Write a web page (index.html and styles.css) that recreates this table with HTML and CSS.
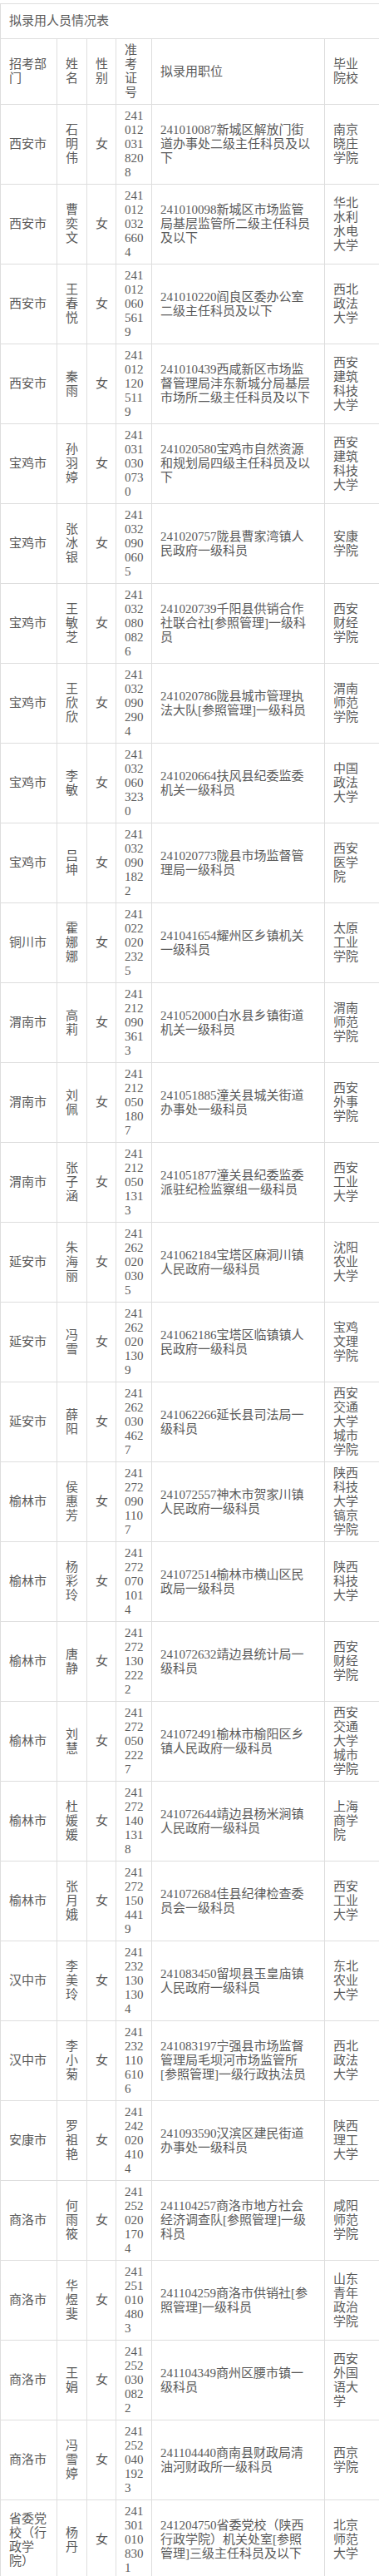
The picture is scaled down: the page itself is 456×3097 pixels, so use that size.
FILE: index.html
```html
<!DOCTYPE html>
<html lang="zh-CN">
<head>
<meta charset="utf-8">
<title>拟录用人员情况表</title>
<link rel="stylesheet" href="styles.css">
</head>
<body>
<table class="sheet">
  <colgroup>
    <col class="w-dept"><col class="w-name"><col class="w-sex"><col class="w-num"><col class="w-pos"><col class="w-school">
  </colgroup>
  <thead>
    <tr><th class="title" colspan="6">拟录用人员情况表</th></tr>
    <tr class="head">
      <th>招考部<br>门</th><th>姓<br>名</th><th>性<br>别</th><th>准<br>考<br>证<br>号</th><th>拟录用职位</th><th>毕业<br>院校</th>
    </tr>
  </thead>
  <tbody>
    <tr><td>西安市</td><td>石<br>明<br>伟</td><td>女</td><td>241<br>012<br>031<br>820<br>8</td><td>241010087新城区解放门街<br>道办事处二级主任科员及以<br>下</td><td>南京<br>晓庄<br>学院</td></tr>
    <tr><td>西安市</td><td>曹<br>奕<br>文</td><td>女</td><td>241<br>012<br>032<br>660<br>4</td><td>241010098新城区市场监管<br>局基层监管所二级主任科员<br>及以下</td><td>华北<br>水利<br>水电<br>大学</td></tr>
    <tr><td>西安市</td><td>王<br>春<br>悦</td><td>女</td><td>241<br>012<br>060<br>561<br>9</td><td>241010220阎良区委办公室<br>二级主任科员及以下</td><td>西北<br>政法<br>大学</td></tr>
    <tr><td>西安市</td><td>秦<br>雨</td><td>女</td><td>241<br>012<br>120<br>511<br>9</td><td>241010439西咸新区市场监<br>督管理局沣东新城分局基层<br>市场所二级主任科员及以下</td><td>西安<br>建筑<br>科技<br>大学</td></tr>
    <tr><td>宝鸡市</td><td>孙<br>羽<br>婷</td><td>女</td><td>241<br>031<br>030<br>073<br>0</td><td>241020580宝鸡市自然资源<br>和规划局四级主任科员及以<br>下</td><td>西安<br>建筑<br>科技<br>大学</td></tr>
    <tr><td>宝鸡市</td><td>张<br>冰<br>银</td><td>女</td><td>241<br>032<br>090<br>060<br>5</td><td>241020757陇县曹家湾镇人<br>民政府一级科员</td><td>安康<br>学院</td></tr>
    <tr><td>宝鸡市</td><td>王<br>敏<br>芝</td><td>女</td><td>241<br>032<br>080<br>082<br>6</td><td>241020739千阳县供销合作<br>社联合社[参照管理]一级科<br>员</td><td>西安<br>财经<br>学院</td></tr>
    <tr><td>宝鸡市</td><td>王<br>欣<br>欣</td><td>女</td><td>241<br>032<br>090<br>290<br>4</td><td>241020786陇县城市管理执<br>法大队[参照管理]一级科员</td><td>渭南<br>师范<br>学院</td></tr>
    <tr><td>宝鸡市</td><td>李<br>敏</td><td>女</td><td>241<br>032<br>060<br>323<br>0</td><td>241020664扶风县纪委监委<br>机关一级科员</td><td>中国<br>政法<br>大学</td></tr>
    <tr><td>宝鸡市</td><td>吕<br>坤</td><td>女</td><td>241<br>032<br>090<br>182<br>2</td><td>241020773陇县市场监督管<br>理局一级科员</td><td>西安<br>医学<br>院</td></tr>
    <tr><td>铜川市</td><td>霍<br>娜<br>娜</td><td>女</td><td>241<br>022<br>020<br>232<br>5</td><td>241041654耀州区乡镇机关<br>一级科员</td><td>太原<br>工业<br>学院</td></tr>
    <tr><td>渭南市</td><td>高<br>莉</td><td>女</td><td>241<br>212<br>090<br>361<br>3</td><td>241052000白水县乡镇街道<br>机关一级科员</td><td>渭南<br>师范<br>学院</td></tr>
    <tr><td>渭南市</td><td>刘<br>佩</td><td>女</td><td>241<br>212<br>050<br>180<br>7</td><td>241051885潼关县城关街道<br>办事处一级科员</td><td>西安<br>外事<br>学院</td></tr>
    <tr><td>渭南市</td><td>张<br>子<br>涵</td><td>女</td><td>241<br>212<br>050<br>131<br>3</td><td>241051877潼关县纪委监委<br>派驻纪检监察组一级科员</td><td>西安<br>工业<br>大学</td></tr>
    <tr><td>延安市</td><td>朱<br>海<br>丽</td><td>女</td><td>241<br>262<br>020<br>030<br>5</td><td>241062184宝塔区麻洞川镇<br>人民政府一级科员</td><td>沈阳<br>农业<br>大学</td></tr>
    <tr><td>延安市</td><td>冯<br>雪</td><td>女</td><td>241<br>262<br>020<br>130<br>9</td><td>241062186宝塔区临镇镇人<br>民政府一级科员</td><td>宝鸡<br>文理<br>学院</td></tr>
    <tr><td>延安市</td><td>薛<br>阳</td><td>女</td><td>241<br>262<br>030<br>462<br>7</td><td>241062266延长县司法局一<br>级科员</td><td>西安<br>交通<br>大学<br>城市<br>学院</td></tr>
    <tr><td>榆林市</td><td>侯<br>惠<br>芳</td><td>女</td><td>241<br>272<br>090<br>110<br>7</td><td>241072557神木市贺家川镇<br>人民政府一级科员</td><td>陕西<br>科技<br>大学<br>镐京<br>学院</td></tr>
    <tr><td>榆林市</td><td>杨<br>彩<br>玲</td><td>女</td><td>241<br>272<br>070<br>101<br>4</td><td>241072514榆林市横山区民<br>政局一级科员</td><td>陕西<br>科技<br>大学</td></tr>
    <tr><td>榆林市</td><td>唐<br>静</td><td>女</td><td>241<br>272<br>130<br>222<br>2</td><td>241072632靖边县统计局一<br>级科员</td><td>西安<br>财经<br>学院</td></tr>
    <tr><td>榆林市</td><td>刘<br>慧</td><td>女</td><td>241<br>272<br>050<br>222<br>7</td><td>241072491榆林市榆阳区乡<br>镇人民政府一级科员</td><td>西安<br>交通<br>大学<br>城市<br>学院</td></tr>
    <tr><td>榆林市</td><td>杜<br>媛<br>媛</td><td>女</td><td>241<br>272<br>140<br>131<br>8</td><td>241072644靖边县杨米涧镇<br>人民政府一级科员</td><td>上海<br>商学<br>院</td></tr>
    <tr><td>榆林市</td><td>张<br>月<br>娥</td><td>女</td><td>241<br>272<br>150<br>441<br>9</td><td>241072684佳县纪律检查委<br>员会一级科员</td><td>西安<br>工业<br>大学</td></tr>
    <tr><td>汉中市</td><td>李<br>美<br>玲</td><td>女</td><td>241<br>232<br>130<br>130<br>4</td><td>241083450留坝县玉皇庙镇<br>人民政府一级科员</td><td>东北<br>农业<br>大学</td></tr>
    <tr><td>汉中市</td><td>李<br>小<br>菊</td><td>女</td><td>241<br>232<br>110<br>610<br>6</td><td>241083197宁强县市场监督<br>管理局毛坝河市场监管所<br>[参照管理]一级行政执法员</td><td>西北<br>政法<br>大学</td></tr>
    <tr><td>安康市</td><td>罗<br>祖<br>艳</td><td>女</td><td>241<br>242<br>020<br>410<br>4</td><td>241093590汉滨区建民街道<br>办事处一级科员</td><td>陕西<br>理工<br>大学</td></tr>
    <tr><td>商洛市</td><td>何<br>雨<br>筱</td><td>女</td><td>241<br>252<br>020<br>170<br>4</td><td>241104257商洛市地方社会<br>经济调查队[参照管理]一级<br>科员</td><td>咸阳<br>师范<br>学院</td></tr>
    <tr><td>商洛市</td><td>华<br>煜<br>斐</td><td>女</td><td>241<br>251<br>010<br>480<br>3</td><td>241104259商洛市供销社[参<br>照管理]一级科员</td><td>山东<br>青年<br>政治<br>学院</td></tr>
    <tr><td>商洛市</td><td>王<br>娟</td><td>女</td><td>241<br>252<br>030<br>082<br>2</td><td>241104349商州区腰市镇一<br>级科员</td><td>西安<br>外国<br>语大<br>学</td></tr>
    <tr><td>商洛市</td><td>冯<br>雪<br>婷</td><td>女</td><td>241<br>252<br>040<br>192<br>3</td><td>241104440商南县财政局清<br>油河财政所一级科员</td><td>西京<br>学院</td></tr>
    <tr><td>省委党<br>校（行<br>政学<br>院）</td><td>杨<br>丹</td><td>女</td><td>241<br>301<br>010<br>830<br>1</td><td>241204750省委党校（陕西<br>行政学院）机关处室[参照<br>管理]三级主任科员及以下</td><td>北京<br>师范<br>大学</td></tr>
  </tbody>
</table>
</body>
</html>
```

FILE: styles.css
```css
html, body {
  margin: 0;
  padding: 0;
  background: #ffffff;
}

body {
  padding-top: 4px;
  font-family: "Liberation Serif", "Noto Sans CJK SC", serif;
  font-size: 15px;
  line-height: 17px;
  color: #5a5a5a;
}

.sheet {
  width: 456px;
  table-layout: fixed;
  border-collapse: collapse;
}

.w-dept { width: 68px; }
.w-name { width: 36px; }
.w-sex { width: 35px; }
.w-num { width: 43px; }
.w-pos { width: 208px; }
.w-school { width: 66px; }

.sheet th,
.sheet td {
  border: 1px solid #dedede;
  padding: 5px 10px;
  text-align: left;
  vertical-align: middle;
  font-weight: normal;
  white-space: nowrap;
  overflow: hidden;
}

.sheet th.title {
  padding: 12px 10px;
}
```
